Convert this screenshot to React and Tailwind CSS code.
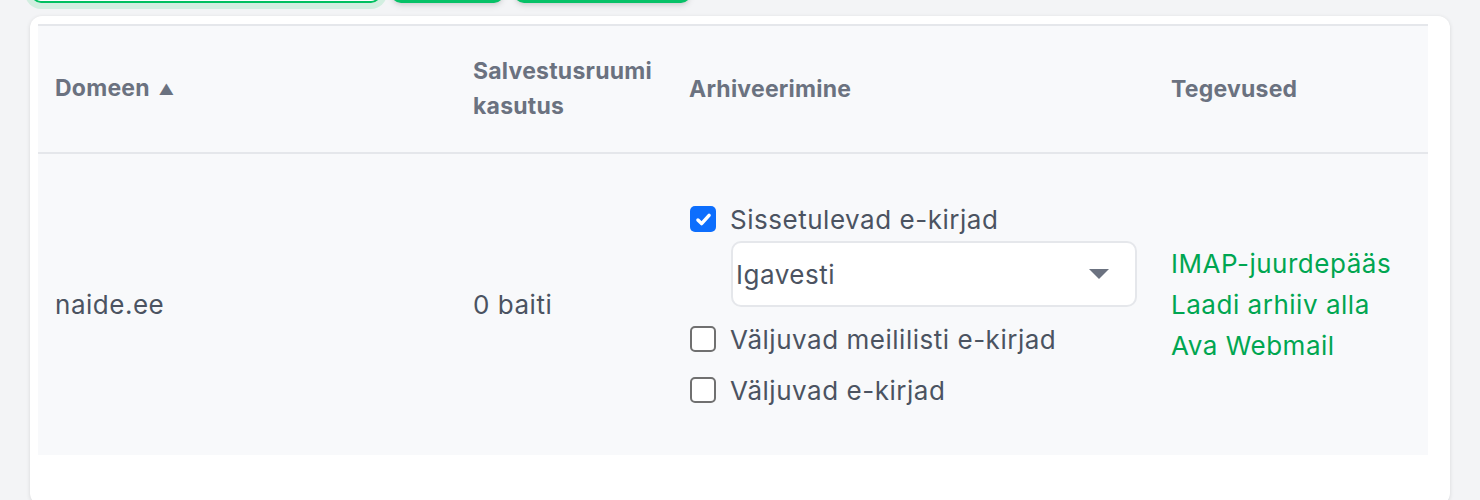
import { useState } from 'react';

const rows = [{ domain: 'naide.ee', usage: '0 baiti' }];

function Checkbox({ checked, onChange }) {
  return (
    <button
      type="button"
      onClick={onChange}
      className={
        checked
          ? 'w-[26px] h-[26px] shrink-0 rounded-[5px] bg-[#0d6efd] flex items-center justify-center'
          : 'w-[26px] h-[26px] shrink-0 rounded-[5px] border-2 border-[#707070] bg-white'
      }
    >
      {checked && (
        <svg viewBox="0 0 16 16" className="w-[19px] h-[19px]" fill="none">
          <path d="M3.3 8.4l3.1 3.1 6.3-7" stroke="white" strokeWidth="2.9" strokeLinecap="round" strokeLinejoin="round" />
        </svg>
      )}
    </button>
  );
}

export default function App() {
  const [incoming, setIncoming] = useState(true);
  const [listOut, setListOut] = useState(false);
  const [outgoing, setOutgoing] = useState(false);

  return (
    <div className="min-h-screen bg-[#f3f4f6] font-['Inter','Noto_Sans',sans-serif] overflow-hidden">
      {/* toolbar, mostly scrolled above the viewport */}
      <div className="flex items-end gap-[10px] pl-[31px] h-[46px] -mt-[43px]">
        <div className="w-[350px] h-[46px] rounded-[10px] border-2 border-[#00c060] bg-white ring-[6px] ring-[#d2eee0]" />
        <button className="w-[113px] h-[46px] rounded-[10px] bg-[#06c167] shadow-md" />
        <button className="w-[177px] h-[46px] rounded-[10px] bg-[#06c167] shadow-md" />
      </div>

      <div className="mx-[30px] mt-[13px] bg-white rounded-xl shadow-[0_1px_4px_rgba(0,0,0,0.12)] pl-2 pr-[22px] pt-2 pb-[50px]">
        <table className="w-full border-collapse text-left table-fixed">
          <colgroup>
            <col className="w-[418px]" />
            <col className="w-[216px]" />
            <col className="w-[482px]" />
            <col className="w-[274px]" />
          </colgroup>
          <thead>
            <tr className="bg-[#f8f9fb] border-t-2 border-b-2 border-[#e5e7eb] h-[128px] text-[23px] font-bold text-[#6b7280] leading-[35px] tracking-[0.01em]">
              <th className="pl-[17px] align-middle">
                Domeen <span className="text-[15px] ml-[3px] align-[1px]">▲</span>
              </th>
              <th className="pl-[17px] pr-2 align-middle">Salvestusruumi kasutus</th>
              <th className="pl-[17px] align-middle">Arhiveerimine</th>
              <th className="pl-[17px] align-middle">Tegevused</th>
            </tr>
          </thead>
          <tbody>
            {rows.map(r => (
              <tr key={r.domain} className="bg-[#f8f9fb] h-[302px] text-[26px] tracking-[0.02em] text-[#4b5361]">
                <td className="pl-[17px] align-middle">{r.domain}</td>
                <td className="pl-[17px] align-middle">{r.usage}</td>
                <td className="pl-[18px] align-middle">
                  <div className="flex flex-col">
                    <label className="flex items-center gap-[14px] h-[34px]">
                      <Checkbox checked={incoming} onChange={() => setIncoming(!incoming)} />
                      <span>Sissetulevad e-kirjad</span>
                    </label>
                    <div className="ml-[41px] mt-[5px] w-[406px] h-[66px] rounded-[10px] border-2 border-[#e5e7eb] bg-white flex items-center justify-between pl-[3px] pr-[26px]">
                      <span>Igavesti</span>
                      <svg viewBox="0 0 20 10" className="w-[20px] h-[10px]">
                        <path d="M0 0h20L10 10z" fill="#6b7280" />
                      </svg>
                    </div>
                    <label className="flex items-center gap-[14px] h-[34px] mt-[15px]">
                      <Checkbox checked={listOut} onChange={() => setListOut(!listOut)} />
                      <span>Väljuvad meililisti e-kirjad</span>
                    </label>
                    <label className="flex items-center gap-[14px] h-[34px] mt-[17px]">
                      <Checkbox checked={outgoing} onChange={() => setOutgoing(!outgoing)} />
                      <span>Väljuvad e-kirjad</span>
                    </label>
                  </div>
                </td>
                <td className="pl-[17px] align-middle text-[#00a651] leading-[41px]">
                  <a href="#" className="block">IMAP-juurdepääs</a>
                  <a href="#" className="block">Laadi arhiiv alla</a>
                  <a href="#" className="block">Ava Webmail</a>
                </td>
              </tr>
            ))}
          </tbody>
        </table>
      </div>
    </div>
  );
}
